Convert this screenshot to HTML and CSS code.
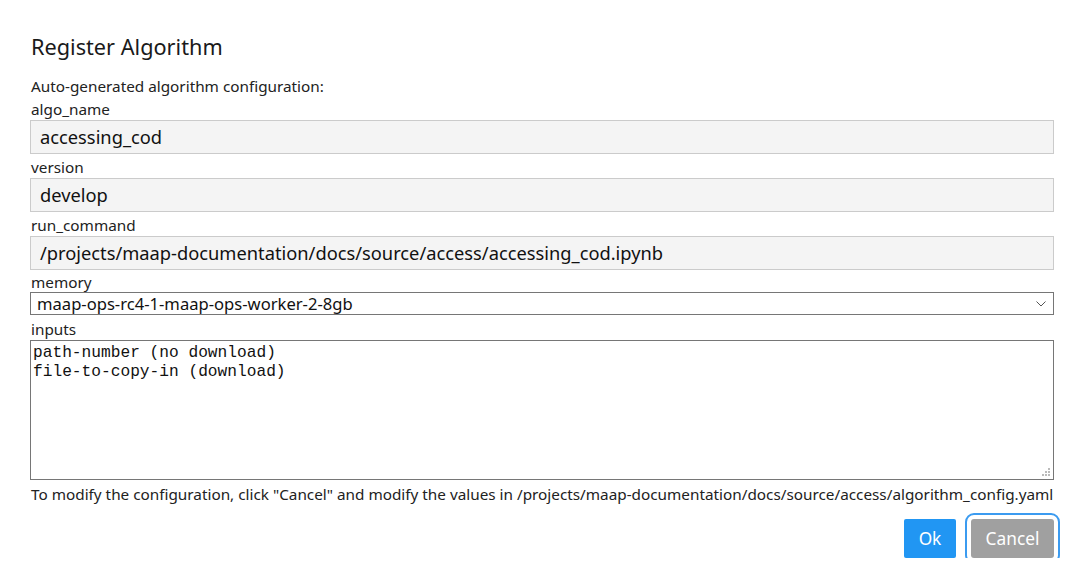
FILE: index.html
```html
<!DOCTYPE html>
<html>
<head>
<meta charset="utf-8">
<link rel="stylesheet" href="styles.css">
</head>
<body>
<div class="dialog">
  <h1 class="title">Register Algorithm</h1>
  <div class="note">Auto-generated algorithm configuration:</div>
  <div class="field">
    <div class="label">algo_name</div>
    <div class="input">accessing_cod</div>
  </div>
  <div class="field">
    <div class="label">version</div>
    <div class="input">develop</div>
  </div>
  <div class="field">
    <div class="label">run_command</div>
    <div class="input">/projects/maap-documentation/docs/source/access/accessing_cod.ipynb</div>
  </div>
  <div class="field">
    <div class="label label-tight">memory</div>
    <div class="select">
      <span>maap-ops-rc4-1-maap-ops-worker-2-8gb</span>
      <svg class="chev" width="10" height="6" viewBox="0 0 10 6"><path d="M0.5 0.5 L5 5 L9.5 0.5" fill="none" stroke="#555" stroke-width="1"/></svg>
    </div>
  </div>
  <div class="field">
    <div class="label label-loose">inputs</div>
    <div class="textarea">path-number (no download)
file-to-copy-in (download)<svg class="grip" width="8" height="8" viewBox="0 0 8 8"><rect x="6" y="0" width="2" height="2" fill="#bbb"/><rect x="3" y="3" width="2" height="2" fill="#bbb"/><rect x="6" y="3" width="2" height="2" fill="#bbb"/><rect x="0" y="6" width="2" height="2" fill="#bbb"/><rect x="3" y="6" width="2" height="2" fill="#bbb"/><rect x="6" y="6" width="2" height="2" fill="#bbb"/></svg></div>
  </div>
  <div class="footnote">To modify the configuration, click "Cancel" and modify the values in /projects/maap-documentation/docs/source/access/algorithm_config.yaml</div>
  <div class="actions">
    <button class="btn ok">Ok</button>
    <button class="btn cancel">Cancel</button>
  </div>
</div>
</body>
</html>
```

FILE: styles.css
```css
html, body {
  margin: 0;
  padding: 0;
  background: #ffffff;
}
body {
  font-family: "Noto Sans", "Open Sans", sans-serif;
  color: #222;
}
.dialog {
  width: 1024px;
  padding: 29px 0 0 30px;
  display: flex;
  flex-direction: column;
}
.title {
  font-size: 21.7px;
  font-weight: 400;
  margin: 0 0 11px 1px;
  line-height: 36px;
  color: #1a1a1a;
}
.note, .label, .footnote {
  font-size: 15.3px;
  line-height: 20px;
  margin-left: 1px;
}
.field {
  display: flex;
  flex-direction: column;
}
.label {
  margin-top: 3px;
  margin-bottom: 1px;
}
.label-tight {
  margin-top: 2px;
  margin-bottom: 0;
}
.label-loose {
  margin-top: 4px;
}
.input {
  height: 32px;
  border: 1px solid #cbcbcb;
  background: #f4f4f4;
  font-size: 18.3px;
  line-height: 32px;
  padding-left: 9px;
  color: #111;
}
.select {
  height: 21px;
  border: 1px solid #767676;
  display: flex;
  align-items: center;
  justify-content: space-between;
  padding: 0 6px 0 6px;
  font-size: 16.6px;
  color: #111;
}
.select span {
  line-height: 21px;
}
.chev {
  margin-right: 1px;
}
.textarea {
  position: relative;
  border: 1px solid #767676;
  font-family: "Liberation Mono", "Courier New", monospace;
  font-size: 16.2px;
  line-height: 19px;
  padding: 3px 2px;
  white-space: pre;
  box-sizing: border-box;
  height: 140px;
  color: #111;
}
.grip {
  position: absolute;
  right: 3px;
  bottom: 3px;
}
.footnote {
  margin-top: 4px;
  white-space: nowrap;
}
.actions {
  display: flex;
  justify-content: flex-end;
  gap: 15px;
  margin-top: 15px;
}
.btn {
  font-family: "Noto Sans", "Open Sans", sans-serif;
  font-size: 17.3px;
  color: #fff;
  border: none;
  border-radius: 2px;
  height: 39px;
  padding: 0;
}
.ok {
  background: #2196f3;
  width: 52px;
}
.cancel {
  background: #a0a0a0;
  width: 83px;
  outline: 2px solid #3b9bf0;
  outline-offset: 4px;
  border-radius: 3px;
}
```
